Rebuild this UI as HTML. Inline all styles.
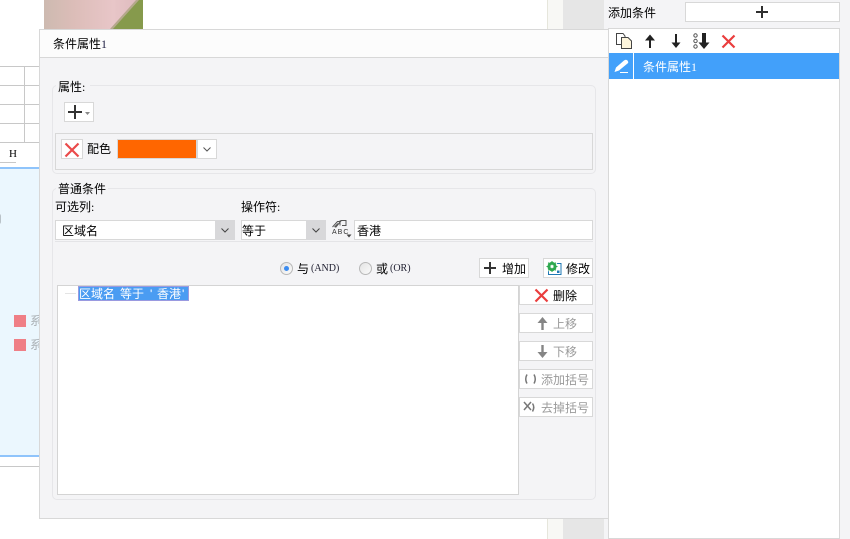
<!DOCTYPE html>
<html lang="zh"><head><meta charset="utf-8">
<style>
html,body{margin:0;padding:0;width:850px;height:539px;overflow:hidden;background:#fff}
body{position:relative;font:12px/14px "Liberation Sans","WenQuanYi Zen Hei","Noto Sans CJK SC",sans-serif;color:#000}
.a{position:absolute;box-sizing:border-box}
.t{position:absolute;white-space:nowrap;line-height:14px}
.b{position:absolute;box-sizing:border-box;background:#fff;border:1px solid #d8d8d8}
.g{color:#9a9a9a}
.s{font-family:"Liberation Serif",serif}
svg{position:absolute;overflow:visible}
</style></head><body>

<!-- background left -->
<svg style="left:44px;top:0" width="99" height="29"><defs><linearGradient id="p" x1="0" x2="1" y1="0" y2="0"><stop offset="0" stop-color="#cdbab0"/><stop offset=".3" stop-color="#dcbdb8"/><stop offset=".7" stop-color="#e8c6c8"/><stop offset="1" stop-color="#dcb8bc"/></linearGradient></defs><rect width="99" height="29" fill="url(#p)"/><path d="M94 0H99V29H68Z" fill="#869a4c"/><path d="M92 0H95L69 29H66Z" fill="#b5a88c"/></svg>
<div class="a" style="left:0;top:66px;width:39px;height:1px;background:#c8c8c8"></div>
<div class="a" style="left:0;top:85px;width:39px;height:1px;background:#c8c8c8"></div>
<div class="a" style="left:0;top:104px;width:39px;height:1px;background:#c8c8c8"></div>
<div class="a" style="left:0;top:123px;width:39px;height:1px;background:#c8c8c8"></div>
<div class="a" style="left:0;top:142px;width:39px;height:1px;background:#c8c8c8"></div>
<div class="a" style="left:24px;top:66px;width:1px;height:77px;background:#c8c8c8"></div>
<div class="t s" style="left:9px;top:147px;font-size:11px">H</div>
<div class="a" style="left:0;top:162px;width:16px;height:1px;background:#c8c8c8"></div>
<div class="a" style="left:0;top:167px;width:39px;height:290px;background:#ebf7fe;border-top:2px solid #8fc4fb;border-bottom:2px solid #8fc4fb"></div>
<div class="a" style="left:0;top:466px;width:39px;height:1px;background:#c8c8c8"></div>
<div class="a" style="left:-3px;top:214px;width:4px;height:10px;background:#b9c2c8;border-radius:2px"></div>
<div class="a" style="left:14px;top:315px;width:12px;height:12px;background:#ef7f86"></div>
<div class="a" style="left:14px;top:339px;width:12px;height:12px;background:#ef7f86"></div>
<div class="a" style="left:30px;top:314px;width:9px;height:14px;overflow:hidden;color:#aab0b4">系</div>
<div class="a" style="left:30px;top:338px;width:9px;height:14px;overflow:hidden;color:#aab0b4">系</div>

<!-- background right -->
<div class="a" style="left:547px;top:0;width:1px;height:539px;background:#e6e6dc"></div>
<div class="a" style="left:548px;top:0;width:15px;height:539px;background:#f8f8f5"></div>
<div class="a" style="left:563px;top:0;width:41px;height:539px;background:#e6e6e6"></div>
<div class="a" style="left:604px;top:0;width:246px;height:539px;background:#f4f4f6"></div>

<div class="t" style="left:608px;top:6px">添加条件</div>
<div class="b" style="left:685px;top:2px;width:155px;height:20px"></div>
<svg style="left:756px;top:6px" width="12" height="12"><path d="M0 6H12M6 0V12" stroke="#2f2f2f" stroke-width="2"/></svg>

<div class="b" style="left:608px;top:28px;width:232px;height:511px"></div>
<!-- list toolbar -->
<svg style="left:616px;top:33px" width="17" height="17"><path d="M.5.5H7L9 3V11.500H.5Z" fill="#fff" stroke="#444"/><path d="M5.500 4.500H12L15.500 8V15.500H5.500Z" fill="#fdf5dc" stroke="#444"/></svg>
<svg style="left:644px;top:34px" width="12" height="14"><path d="M6 14V3" stroke="#222" stroke-width="2"/><path d="M1 6.500L6 .5L11 6.500Z" fill="#222"/></svg>
<svg style="left:670px;top:34px" width="12" height="14"><path d="M6 0V11" stroke="#222" stroke-width="2"/><path d="M1.500 8.500L6 14L10.500 8.500Z" fill="#222"/></svg>
<svg style="left:693px;top:33px" width="17" height="17"><circle cx="2.500" cy="2.500" r="1.700" fill="none" stroke="#555"/><circle cx="2.500" cy="8" r="1.700" fill="none" stroke="#555"/><circle cx="2.500" cy="13.500" r="1.700" fill="none" stroke="#555"/><path d="M11 0V11" stroke="#222" stroke-width="4"/><path d="M5.500 9.500H16.500L11 16Z" fill="#222"/></svg>
<svg style="left:722px;top:35px" width="13" height="13"><path d="M.5.5L12.500 12.500M12.500.5L.5 12.500" stroke="#ea3d3d" stroke-width="2.200"/></svg>
<!-- list row -->
<div class="a" style="left:609px;top:53px;width:230px;height:26px;background:#42a0fa"></div>
<div class="a" style="left:633px;top:53px;width:1px;height:26px;background:#fff"></div>
<svg style="left:614px;top:58px" width="16" height="16"><path d="M.5 14L2 9.500L10 2.500Q12 1 13.500 2.500Q15 4.500 13.500 5.500L5 12.500Z" fill="#fff"/><path d="M6 14.500H14" stroke="#fff" stroke-width="1"/></svg>
<div class="t" style="left:643px;top:60px;color:#fff">条件属性<span class="s">1</span></div>

<!-- dialog -->
<div class="a" style="left:39px;top:29px;width:570px;height:490px;background:#f4f4f6;border:1px solid #d8d8d8"></div>
<div class="a" style="left:40px;top:30px;width:568px;height:28px;background:#fcfcfc;border-bottom:1px solid #d8d8d8"></div>
<div class="t" style="left:53px;top:37px">条件属性<span class="s" style="color:#224">1</span></div>

<!-- 属性 group -->
<div class="a" style="left:52px;top:85px;width:544px;height:89px;border:1px solid #e6e6e9;border-radius:5px"></div>
<div class="a" style="left:56px;top:80px;width:34px;height:10px;background:#f4f4f6"></div>
<div class="t" style="left:58px;top:80px">属性<span class="s">:</span></div>
<div class="b" style="left:64px;top:102px;width:30px;height:20px"></div>
<svg style="left:68px;top:105px" width="24" height="14"><path d="M0 7H14M7 0V14" stroke="#333" stroke-width="2"/><path d="M17 7H22L19.500 10Z" fill="#888"/></svg>
<div class="a" style="left:55px;top:133px;width:538px;height:37px;border:1px solid #d8d8d8"></div>
<div class="b" style="left:61px;top:139px;width:22px;height:20px"></div>
<svg style="left:65px;top:143px" width="14" height="14"><path d="M.5.5L13.500 13.500M13.500.5L.5 13.500" stroke="#ea4a4a" stroke-width="2.200"/></svg>
<div class="t" style="left:87px;top:142px">配色</div>
<div class="a" style="left:117px;top:139px;width:80px;height:20px;background:#ff6600;border:1px solid #d8d8d8"></div>
<div class="b" style="left:197px;top:139px;width:20px;height:20px"></div>
<svg style="left:203px;top:147px" width="8" height="5"><path d="M.5.5L4 4L7.500.5" fill="none" stroke="#555"/></svg>

<!-- 普通条件 group -->
<div class="a" style="left:52px;top:188px;width:544px;height:312px;border:1px solid #e6e6e9;border-radius:5px"></div>
<div class="a" style="left:56px;top:182px;width:52px;height:10px;background:#f4f4f6"></div>
<div class="t" style="left:58px;top:182px">普通条件</div>
<div class="t" style="left:55px;top:200px">可选列<span class="s">:</span></div>
<div class="t" style="left:241px;top:200px">操作符<span class="s">:</span></div>

<div class="b" style="left:55px;top:220px;width:180px;height:20px"></div>
<div class="a" style="left:215px;top:220px;width:20px;height:20px;background:#d8d8da"></div>
<svg style="left:221px;top:228px" width="8" height="5"><path d="M.5.5L4 4L7.500.5" fill="none" stroke="#444"/></svg>
<div class="t" style="left:62px;top:224px">区域名</div>

<div class="b" style="left:241px;top:220px;width:85px;height:20px"></div>
<div class="a" style="left:306px;top:220px;width:20px;height:20px;background:#d8d8da"></div>
<svg style="left:312px;top:228px" width="8" height="5"><path d="M.5.5L4 4L7.500.5" fill="none" stroke="#444"/></svg>
<div class="t" style="left:242px;top:224px">等于</div>

<svg style="left:332px;top:219px" width="20" height="20"><path d="M.5 8L5.500 2.500H8.500L6 5.500L3.500 8.500M2.500 8L6 4.500M8.500 1.500H14V6.500H10" fill="none" stroke="#555"/><path d="M8 1.500V6.500" stroke="#555"/><path d="M14.500 15.500H19.500L17 18.500Z" fill="#444"/></svg>
<div class="t" style="left:332px;top:228px;font-size:7px;line-height:9px;letter-spacing:1px;color:#333">ABC</div>
<div class="b" style="left:354px;top:220px;width:239px;height:20px"></div>
<div class="t" style="left:357px;top:224px">香港</div>

<div class="a" style="left:55px;top:241px;width:538px;height:1px;background:#e4e4e7"></div>

<!-- radios -->
<div class="a" style="left:280px;top:262px;width:13px;height:13px;border-radius:50%;background:linear-gradient(135deg,#e4e4e4,#fafafa);border:1px solid #b8b8b8"></div>
<div class="a" style="left:284px;top:266px;width:5px;height:5px;border-radius:50%;background:#3c8cf0"></div>
<div class="t" style="left:297px;top:262px">与</div>
<div class="t s" style="left:311px;top:262px;font-size:10px;color:#223">(AND)</div>
<div class="a" style="left:359px;top:262px;width:13px;height:13px;border-radius:50%;background:linear-gradient(135deg,#e4e4e4,#fafafa);border:1px solid #b8b8b8"></div>
<div class="t" style="left:376px;top:262px">或</div>
<div class="t s" style="left:390px;top:262px;font-size:10px;color:#223">(OR)</div>

<div class="b" style="left:479px;top:258px;width:50px;height:20px"></div>
<svg style="left:484px;top:262px" width="12" height="12"><path d="M0 6H12M6 0V12" stroke="#333" stroke-width="2"/></svg>
<div class="t" style="left:502px;top:262px">增加</div>
<div class="b" style="left:543px;top:258px;width:50px;height:20px"></div>
<svg style="left:546px;top:260px" width="16" height="16"><rect x="2.500" y="3.500" width="12.500" height="11" fill="#fff" stroke="#1f78b4"/><rect x="11" y="10.500" width="2.500" height="2.500" fill="#1f78b4"/><circle cx="6" cy="6.500" r="5.800" fill="#fff"/><circle cx="6" cy="6.500" r="3.300" fill="none" stroke="#2fa84f" stroke-width="2.600"/><path d="M6 1V12M.5 6.500H11.500M2.200 2.700L9.800 10.300M9.800 2.700L2.200 10.300" stroke="#2fa84f" stroke-width="1.100"/><circle cx="6" cy="6.500" r="1.500" fill="#fff"/></svg>
<div class="t" style="left:566px;top:262px">修改</div>

<!-- tree -->
<div class="b" style="left:57px;top:285px;width:462px;height:210px;border-color:#d4d4d4"></div>
<div class="a" style="left:65px;top:293px;width:11px;height:1px;background:#e4e4e4"></div>
<div class="a" style="left:78px;top:286px;width:111px;height:15px;background:#4a9cf2;outline:1px solid #9a9ae0;outline-offset:-1px"></div>
<div class="t" style="left:79px;top:287px;color:#fff">区域名</div>
<div class="t" style="left:120px;top:287px;color:#fff">等于</div>
<div class="t" style="left:150px;top:287px;color:#fff">'</div>
<div class="t" style="left:157px;top:287px;color:#fff">香港</div>
<div class="t" style="left:182px;top:287px;color:#fff">'</div>

<!-- side buttons -->
<div class="b" style="left:519px;top:285px;width:74px;height:20px"></div>
<svg style="left:535px;top:289px" width="13" height="13"><path d="M.5.5L12.500 12.500M12.500.5L.5 12.500" stroke="#ea3d3d" stroke-width="2.200"/></svg>
<div class="t" style="left:553px;top:289px">删除</div>

<div class="b" style="left:519px;top:313px;width:74px;height:20px"></div>
<svg style="left:537px;top:317px" width="11" height="13"><path d="M5.500 13V3" stroke="#858585" stroke-width="2.400"/><path d="M.5 6L5.500 0L10.500 6Z" fill="#858585"/></svg>
<div class="t g" style="left:553px;top:317px">上移</div>

<div class="b" style="left:519px;top:341px;width:74px;height:20px"></div>
<svg style="left:537px;top:345px" width="11" height="13"><path d="M5.500 0V10" stroke="#858585" stroke-width="2.400"/><path d="M.5 7L5.500 13L10.500 7Z" fill="#858585"/></svg>
<div class="t g" style="left:553px;top:345px">下移</div>

<div class="b" style="left:519px;top:369px;width:74px;height:20px"></div>
<svg style="left:524px;top:374px" width="14" height="10"><path d="M3 .5Q.5 5 3 9.500M10 .5Q12.500 5 10 9.500" fill="none" stroke="#777" stroke-width="1.500"/></svg>
<div class="t g" style="left:541px;top:373px">添加括号</div>

<div class="b" style="left:519px;top:397px;width:74px;height:20px"></div>
<svg style="left:523px;top:401px" width="15" height="12"><path d="M1 1L8 9M8 1L1 9M9.500 2.500Q12 6 9.500 10.500" fill="none" stroke="#777" stroke-width="1.500"/></svg>
<div class="t g" style="left:541px;top:401px">去掉括号</div>

</body></html>
